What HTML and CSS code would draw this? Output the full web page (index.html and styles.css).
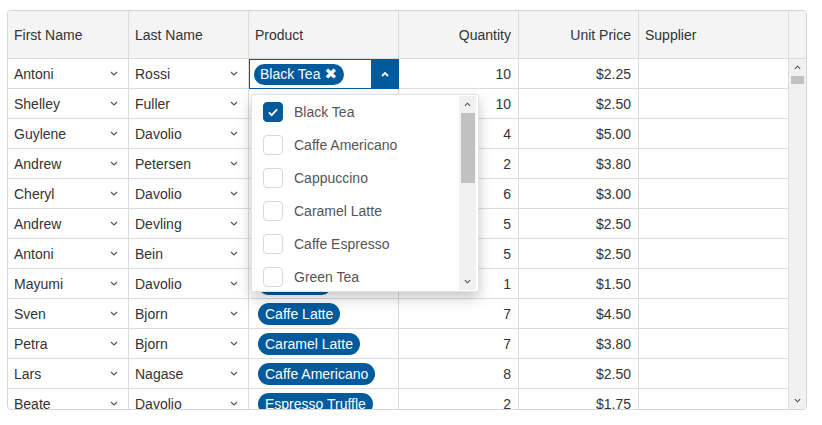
FILE: index.html
```html
<!DOCTYPE html>
<html>
<head>
<meta charset="utf-8">
<link rel="stylesheet" href="styles.css">
</head>
<body>
<div class="grid">
  <div class="head">
    <div class="hc">First Name</div>
    <div class="hc">Last Name</div>
    <div class="hc">Product</div>
    <div class="hc num">Quantity</div>
    <div class="hc num">Unit Price</div>
    <div class="hc">Supplier</div>
    <div class="hc spacer"></div>
  </div>
  <div class="body">
    <div class="rows">
      <div class="row">
        <div class="c sel">Antoni<svg class="chev" viewBox="0 0 8 5"><polyline points="1,1 4,4 7,1"/></svg></div>
        <div class="c sel">Rossi<svg class="chev" viewBox="0 0 8 5"><polyline points="1,1 4,4 7,1"/></svg></div>
        <div class="c prod edit-cell">
          <div class="editor">
            <div class="editor-tags"><span class="pill">Black Tea <span class="x">✖</span></span></div>
            <div class="editor-btn"><svg viewBox="0 0 8 5"><polyline points="1,4 4,1 7,4"/></svg></div>
          </div>
        </div>
        <div class="c num">10</div>
        <div class="c num">$2.25</div>
        <div class="c"></div>
      </div>
      <div class="row">
        <div class="c sel">Shelley<svg class="chev" viewBox="0 0 8 5"><polyline points="1,1 4,4 7,1"/></svg></div>
        <div class="c sel">Fuller<svg class="chev" viewBox="0 0 8 5"><polyline points="1,1 4,4 7,1"/></svg></div>
        <div class="c prod"></div>
        <div class="c num">10</div>
        <div class="c num">$2.50</div>
        <div class="c"></div>
      </div>
      <div class="row">
        <div class="c sel">Guylene<svg class="chev" viewBox="0 0 8 5"><polyline points="1,1 4,4 7,1"/></svg></div>
        <div class="c sel">Davolio<svg class="chev" viewBox="0 0 8 5"><polyline points="1,1 4,4 7,1"/></svg></div>
        <div class="c prod"></div>
        <div class="c num">4</div>
        <div class="c num">$5.00</div>
        <div class="c"></div>
      </div>
      <div class="row">
        <div class="c sel">Andrew<svg class="chev" viewBox="0 0 8 5"><polyline points="1,1 4,4 7,1"/></svg></div>
        <div class="c sel">Petersen<svg class="chev" viewBox="0 0 8 5"><polyline points="1,1 4,4 7,1"/></svg></div>
        <div class="c prod"></div>
        <div class="c num">2</div>
        <div class="c num">$3.80</div>
        <div class="c"></div>
      </div>
      <div class="row">
        <div class="c sel">Cheryl<svg class="chev" viewBox="0 0 8 5"><polyline points="1,1 4,4 7,1"/></svg></div>
        <div class="c sel">Davolio<svg class="chev" viewBox="0 0 8 5"><polyline points="1,1 4,4 7,1"/></svg></div>
        <div class="c prod"></div>
        <div class="c num">6</div>
        <div class="c num">$3.00</div>
        <div class="c"></div>
      </div>
      <div class="row">
        <div class="c sel">Andrew<svg class="chev" viewBox="0 0 8 5"><polyline points="1,1 4,4 7,1"/></svg></div>
        <div class="c sel">Devling<svg class="chev" viewBox="0 0 8 5"><polyline points="1,1 4,4 7,1"/></svg></div>
        <div class="c prod"></div>
        <div class="c num">5</div>
        <div class="c num">$2.50</div>
        <div class="c"></div>
      </div>
      <div class="row">
        <div class="c sel">Antoni<svg class="chev" viewBox="0 0 8 5"><polyline points="1,1 4,4 7,1"/></svg></div>
        <div class="c sel">Bein<svg class="chev" viewBox="0 0 8 5"><polyline points="1,1 4,4 7,1"/></svg></div>
        <div class="c prod"></div>
        <div class="c num">5</div>
        <div class="c num">$2.50</div>
        <div class="c"></div>
      </div>
      <div class="row">
        <div class="c sel">Mayumi<svg class="chev" viewBox="0 0 8 5"><polyline points="1,1 4,4 7,1"/></svg></div>
        <div class="c sel">Davolio<svg class="chev" viewBox="0 0 8 5"><polyline points="1,1 4,4 7,1"/></svg></div>
        <div class="c prod"><span class="pill">Black Tea</span></div>
        <div class="c num">1</div>
        <div class="c num">$1.50</div>
        <div class="c"></div>
      </div>
      <div class="row">
        <div class="c sel">Sven<svg class="chev" viewBox="0 0 8 5"><polyline points="1,1 4,4 7,1"/></svg></div>
        <div class="c sel">Bjorn<svg class="chev" viewBox="0 0 8 5"><polyline points="1,1 4,4 7,1"/></svg></div>
        <div class="c prod"><span class="pill">Caffe Latte</span></div>
        <div class="c num">7</div>
        <div class="c num">$4.50</div>
        <div class="c"></div>
      </div>
      <div class="row">
        <div class="c sel">Petra<svg class="chev" viewBox="0 0 8 5"><polyline points="1,1 4,4 7,1"/></svg></div>
        <div class="c sel">Bjorn<svg class="chev" viewBox="0 0 8 5"><polyline points="1,1 4,4 7,1"/></svg></div>
        <div class="c prod"><span class="pill">Caramel Latte</span></div>
        <div class="c num">7</div>
        <div class="c num">$3.80</div>
        <div class="c"></div>
      </div>
      <div class="row">
        <div class="c sel">Lars<svg class="chev" viewBox="0 0 8 5"><polyline points="1,1 4,4 7,1"/></svg></div>
        <div class="c sel">Nagase<svg class="chev" viewBox="0 0 8 5"><polyline points="1,1 4,4 7,1"/></svg></div>
        <div class="c prod"><span class="pill">Caffe Americano</span></div>
        <div class="c num">8</div>
        <div class="c num">$2.50</div>
        <div class="c"></div>
      </div>
      <div class="row">
        <div class="c sel">Beate<svg class="chev" viewBox="0 0 8 5"><polyline points="1,1 4,4 7,1"/></svg></div>
        <div class="c sel">Davolio<svg class="chev" viewBox="0 0 8 5"><polyline points="1,1 4,4 7,1"/></svg></div>
        <div class="c prod"><span class="pill">Espresso Truffle</span></div>
        <div class="c num">2</div>
        <div class="c num">$1.75</div>
        <div class="c"></div>
      </div>
    </div>
    <div class="vscroll">
      <div class="sbtn"><svg viewBox="0 0 8 5"><polyline points="1,4 4,1 7,4"/></svg></div>
      <div class="sthumb"></div>
      <div class="sfill"></div>
      <div class="sbtn"><svg viewBox="0 0 8 5"><polyline points="1,1 4,4 7,1"/></svg></div>
    </div>
  </div>

  <div class="dropdown">
    <div class="list">
      <div class="item"><span class="cb on"><svg viewBox="0 0 20 20"><polyline points="5.5,10.5 8.5,13.5 14.5,7"/></svg></span>Black Tea</div>
      <div class="item"><span class="cb"></span>Caffe Americano</div>
      <div class="item"><span class="cb"></span>Cappuccino</div>
      <div class="item"><span class="cb"></span>Caramel Latte</div>
      <div class="item"><span class="cb"></span>Caffe Espresso</div>
      <div class="item"><span class="cb"></span>Green Tea</div>
    </div>
    <div class="dscroll">
      <div class="sbtn"><svg viewBox="0 0 8 5"><polyline points="1,4 4,1 7,4"/></svg></div>
      <div class="dthumb"></div>
      <div class="sfill"></div>
      <div class="sbtn"><svg viewBox="0 0 8 5"><polyline points="1,1 4,4 7,1"/></svg></div>
    </div>
  </div>
</div>
</body>
</html>
```
FILE: styles.css
```css
* { box-sizing: border-box; }
html, body { margin: 0; padding: 0; background: #fff; }
body {
  font-family: "Liberation Sans", Arial, sans-serif;
  font-size: 14px;
  color: #333;
  padding: 10px 0 0 7px;
}
.grid {
  position: relative;
  width: 800px;
  height: 400px;
  border: 1px solid #d4d4d4;
  border-radius: 4px;
  overflow: hidden;
  display: flex;
  flex-direction: column;
}
.head, .row {
  display: grid;
  grid-template-columns: 121px 120px 150px 120px 120px 150px;
}
.head {
  grid-template-columns: 121px 120px 150px 120px 120px 150px 17px;
  background: #f4f4f4;
  height: 48px;
  flex: none;
}
.hc {
  display: flex;
  align-items: center;
  padding: 0 7px 0 6px;
  border-right: 1px solid #dcdcdc;
  border-bottom: 1px solid #dcdcdc;
}
.hc.spacer { border-right: none; }
.num { justify-content: flex-end; }
.body {
  flex: 1;
  display: flex;
  min-height: 0;
}
.rows {
  width: 781px;
  overflow: hidden;
}
.row { height: 30px; }
.c {
  display: flex;
  align-items: center;
  padding: 0 7px 0 6px;
  border-right: 1px solid #dcdcdc;
  border-bottom: 1px solid #dcdcdc;
  white-space: nowrap;
  min-width: 0;
}
.c.sel { justify-content: space-between; padding-right: 10px; }
.chev {
  width: 8px;
  height: 5px;
  fill: none;
  stroke: #555;
  stroke-width: 1.2;
}
.c.prod { padding-left: 9px; }
.pill {
  display: inline-flex;
  align-items: center;
  height: 22px;
  padding: 0 7px;
  border-radius: 11px;
  background: #005a9c;
  color: #fff;
  white-space: nowrap;
}
.edit-cell { position: relative; padding: 0; }
.editor {
  position: absolute;
  top: 0;
  left: 0;
  right: -1px;
  bottom: -1px;
  border: 1px solid #005a9c;
  display: flex;
  background: #fff;
}
.editor-tags {
  flex: 1;
  display: flex;
  align-items: center;
  padding-left: 4px;
}
.editor-tags .pill { height: 21px; padding: 0 7px 0 6px; }
.x {
  font-family: "DejaVu Sans", sans-serif;
  font-size: 15px;
  line-height: 1;
  margin-left: 4px;
}
.editor-btn {
  width: 27px;
  background: #005a9c;
  display: flex;
  align-items: center;
  justify-content: center;
}
.editor-btn svg {
  width: 8px;
  height: 5px;
  fill: none;
  stroke: #fff;
  stroke-width: 1.8;
}
.vscroll {
  width: 17px;
  background: #f1f1f1;
  display: flex;
  flex-direction: column;
  align-items: center;
}
.sbtn {
  width: 17px;
  height: 17px;
  flex: none;
  display: flex;
  align-items: center;
  justify-content: center;
}
.sbtn svg {
  width: 7px;
  height: 5px;
  fill: none;
  stroke: #505050;
  stroke-width: 1.3;
}
.sthumb {
  width: 13px;
  height: 8px;
  background: #c1c1c1;
  flex: none;
}
.sfill { flex: 1; }
.dropdown {
  position: absolute;
  left: 243px;
  top: 83px;
  width: 228px;
  height: 198px;
  background: #fff;
  border: 1px solid #e2e2e2;
  border-radius: 3px;
  box-shadow: 0 6px 14px rgba(0, 0, 0, 0.22);
  display: flex;
  padding: 1px 2px 1px 0;
}
.list {
  flex: 1;
  overflow: hidden;
  margin-top: -1px;
}
.item {
  height: 33px;
  display: flex;
  align-items: center;
  padding-left: 11px;
  color: #555;
  white-space: nowrap;
}
.cb {
  width: 20px;
  height: 20px;
  border: 1px solid #d9d9d9;
  border-radius: 4px;
  margin-right: 11px;
  flex: none;
  display: flex;
}
.cb.on {
  background: #005a9c;
  border-color: #005a9c;
}
.cb svg {
  width: 18px;
  height: 18px;
  fill: none;
  stroke: #fff;
  stroke-width: 2;
}
.dscroll {
  width: 17px;
  background: #f1f1f1;
  display: flex;
  flex-direction: column;
  align-items: center;
}
.dthumb {
  width: 14px;
  height: 70px;
  background: #c1c1c1;
  flex: none;
}
```
